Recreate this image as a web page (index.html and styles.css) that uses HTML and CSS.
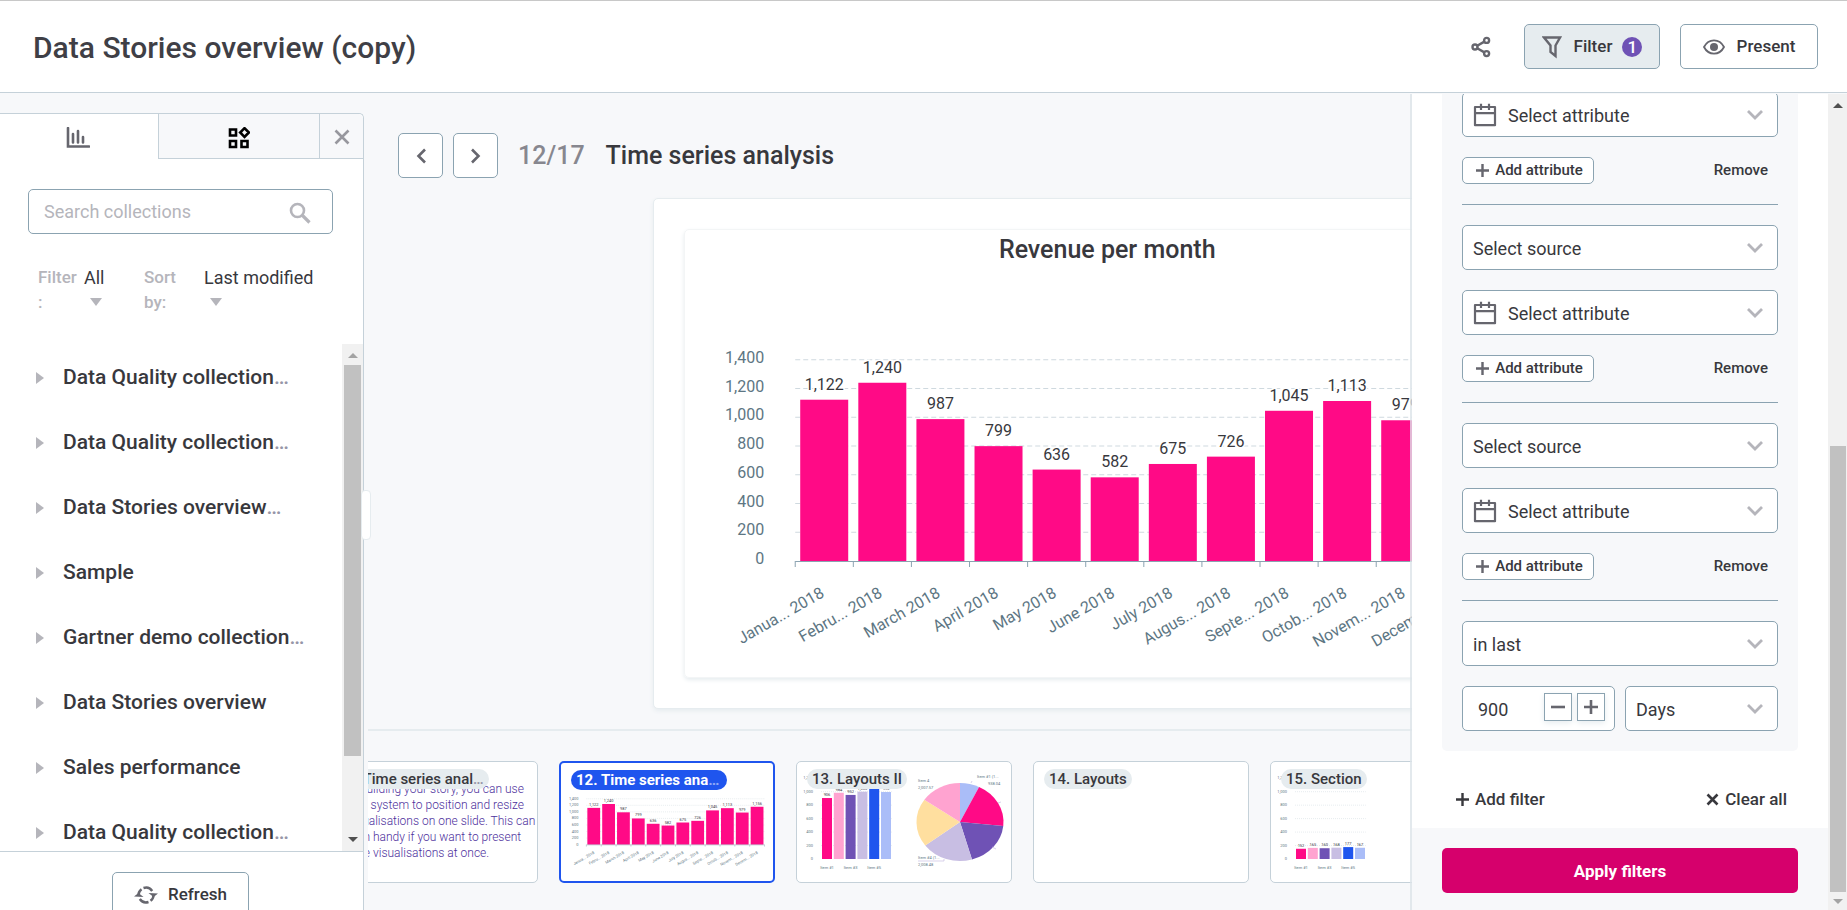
FILE: index.html
```html
<!DOCTYPE html>
<html lang="en">
<head>
<meta charset="utf-8">
<title>Data Stories overview (copy)</title>
<link rel="stylesheet" href="styles.css">
</head>
<body>
<svg class="sprite" aria-hidden="true">
  <symbol id="i-chevron" viewBox="0 0 16 10"><path d="M1 1l7 7 7-7" fill="none" stroke="currentColor" stroke-width="2.8"/></symbol>
  <symbol id="i-calendar" viewBox="0 0 24 24"><path d="M2 4h20v18.200H2zM1.500 10.200h21M8 .8V7M16 .8V7" fill="none" stroke="currentColor" stroke-width="2.2" stroke-linejoin="round"/></symbol>
  <symbol id="i-plus" viewBox="0 0 14 14"><path d="M7 0v14M0 7h14" fill="none" stroke="currentColor" stroke-width="2.6"/></symbol>
</svg>

<header class="topbar">
  <h1 class="topbar-title">Data Stories overview (copy)</h1>
  <button class="icon-button" aria-label="Share">
    <svg width="20" height="22" viewBox="0 0 20 22"><g fill="none" stroke="currentColor" stroke-width="2.4"><circle cx="4" cy="11" r="2.5"/><circle cx="15.6" cy="4.4" r="2.5"/><circle cx="15.6" cy="17.6" r="2.5"/><path d="M6.2 9.800l7.2-4.200M6.2 12.200l7.2 4.200"/></g></svg>
  </button>
  <button class="button button-filter" aria-pressed="true">
    <svg width="20" height="24" viewBox="0 0 20 24"><path d="M2 2.500h16l-4.500 8v10.500l-5-4v-6.500z" fill="none" stroke="currentColor" stroke-width="2.4"/></svg>
    Filter <span class="count">1</span>
  </button>
  <button class="button button-present">
    <svg width="22" height="16" viewBox="0 0 22 16"><path d="M1 8C5.500-.800 16.500-.800 21 8 16.500 16.800 5.500 16.800 1 8z" fill="none" stroke="currentColor" stroke-width="1.800"/><circle cx="11" cy="8" r="4" fill="currentColor"/></svg>
    Present
  </button>
</header>

<div class="workspace">
  <aside class="sidebar">
    <div class="tabs">
      <button class="tab tab-active" aria-label="Visualisations">
        <svg width="24" height="22" viewBox="0 0 24 22"><path d="M2 1v18.500h21M7 7v8.500M12 4v11.500M17 10v5.500" fill="none" stroke="currentColor" stroke-width="2.600" stroke-linecap="round"/></svg>
      </button>
      <button class="tab tab-widgets" aria-label="Widgets">
        <svg width="22" height="22" viewBox="0 0 22 22"><path d="M2 2.500h6v6H2zM2 14h6v6H2zM13.500 14h6v6h-6zM16.500 1.200L20.800 5.500 16.500 9.800 12.200 5.500z" fill="none" stroke="currentColor" stroke-width="2.600"/></svg>
      </button>
      <button class="tab tab-close" aria-label="Close">
        <svg width="16" height="16" viewBox="0 0 16 16"><path d="M1.500 1.500l13 13M14.500 1.500l-13 13" fill="none" stroke="currentColor" stroke-width="2.600"/></svg>
      </button>
    </div>
    <div class="search">
      <input type="text" placeholder="Search collections" aria-label="Search collections">
      <svg class="search-icon" width="22" height="22" viewBox="0 0 22 22"><circle cx="8.500" cy="8.500" r="6.500" fill="none" stroke="currentColor" stroke-width="2.600"/><path d="M13 13l7.500 7.500" stroke="currentColor" stroke-width="3.200"/></svg>
    </div>
    <div class="list-options">
      <span class="option-label option-filter">Filter<br>:</span>
      <button class="option-button option-all">All<span class="caret"></span></button>
      <span class="option-label option-sort">Sort<br>by:</span>
      <button class="option-button">Last modified<span class="caret"></span></button>
    </div>
    <div class="list-area">
      <ul class="collections">
        <li><span class="expander"></span>Data Quality collection<span class="more">…</span></li>
        <li><span class="expander"></span>Data Quality collection<span class="more">…</span></li>
        <li><span class="expander"></span>Data Stories overview<span class="more">…</span></li>
        <li><span class="expander"></span>Sample</li>
        <li><span class="expander"></span>Gartner demo collection<span class="more">…</span></li>
        <li><span class="expander"></span>Data Stories overview</li>
        <li><span class="expander"></span>Sales performance</li>
        <li><span class="expander"></span>Data Quality collection<span class="more">…</span></li>
      </ul>
      <div class="scrollbar scrollbar-list" aria-hidden="true">
        <span class="arrow-up arrow-off"></span><span class="thumb-list"></span><span class="track-rest"></span><span class="arrow-down"></span>
      </div>
    </div>
    <div class="sidebar-footer">
      <button class="button button-refresh">
        <svg width="24" height="20" viewBox="0 0 24 20"><g fill="none" stroke="currentColor" stroke-width="2.400"><path d="M4.500 11A7.500 7.500 0 0 1 7.500 4.200M9.500 3A7.500 7.500 0 0 1 18.200 6"/><path d="M19.500 9A7.500 7.500 0 0 1 16.500 15.800M14.500 17A7.500 7.500 0 0 1 5.800 14"/></g><path d="M0 11.500l4.500-3.500 5 4zM24 8.500l-4.500 3.500-5-4z" fill="currentColor"/></svg>
        Refresh
      </button>
    </div>
    <span class="resize-handle"></span>
  </aside>

  <main class="stage">
    <div class="slide-nav">
      <button class="nav-button" aria-label="Previous slide"><svg width="10" height="16" viewBox="0 0 10 16"><path d="M9 1.500L2.500 8 9 14.500" fill="none" stroke="currentColor" stroke-width="2.600"/></svg></button>
      <button class="nav-button" aria-label="Next slide"><svg width="10" height="16" viewBox="0 0 10 16"><path d="M1 1.500L7.500 8 1 14.500" fill="none" stroke="currentColor" stroke-width="2.600"/></svg></button>
      <span class="slide-count">12/17</span>
      <h2 class="slide-title">Time series analysis</h2>
    </div>
    <div class="slide-area">
      <section class="slide">
        <figure class="widget">
          <svg id="main-chart" class="chart" viewBox="0 0 844 447" role="img" aria-label="Revenue per month"></svg>
        </figure>
      </section>
    </div>
    <div class="filmstrip">
      <article class="thumb">
        <span class="badge">11. Time series anal<span class="more">…</span></span>
        <p class="thumb-text">While building your story, you can use<br>the grid system to position and resize<br>the visualisations on one slide. This can<br>come in handy if you want to present<br>multiple visualisations at once.</p>
      </article>
      <article class="thumb thumb-current">
        <span class="badge">12. Time series ana<span class="more">…</span></span>
        <svg id="thumb-12" class="chart" viewBox="0 0 214 120"></svg>
      </article>
      <article class="thumb">
        <span class="badge">13. Layouts II</span>
        <svg id="thumb-13" class="chart" viewBox="0 0 214 120"></svg>
      </article>
      <article class="thumb"><span class="badge">14. Layouts</span></article>
      <article class="thumb">
        <span class="badge">15. Section</span>
        <svg id="thumb-15" class="chart" viewBox="0 0 214 120"></svg>
      </article>
    </div>
  </main>

  <aside class="filter-panel">
    <form class="filter-scroll">
      <div class="filter-group">
        <div class="field field-date"><svg class="field-icon"><use href="#i-calendar"/></svg><select aria-label="Attribute 1"><option>Select attribute</option></select><svg class="chevron"><use href="#i-chevron"/></svg></div>
        <div class="row"><button type="button" class="small-button"><svg><use href="#i-plus"/></svg>Add attribute</button><button type="button" class="text-button">Remove</button></div>
        <hr>
        <div class="field"><select aria-label="Source 2"><option>Select source</option></select><svg class="chevron"><use href="#i-chevron"/></svg></div>
        <div class="field field-date"><svg class="field-icon"><use href="#i-calendar"/></svg><select aria-label="Attribute 2"><option>Select attribute</option></select><svg class="chevron"><use href="#i-chevron"/></svg></div>
        <div class="row"><button type="button" class="small-button"><svg><use href="#i-plus"/></svg>Add attribute</button><button type="button" class="text-button">Remove</button></div>
        <hr>
        <div class="field"><select aria-label="Source 3"><option>Select source</option></select><svg class="chevron"><use href="#i-chevron"/></svg></div>
        <div class="field field-date"><svg class="field-icon"><use href="#i-calendar"/></svg><select aria-label="Attribute 3"><option>Select attribute</option></select><svg class="chevron"><use href="#i-chevron"/></svg></div>
        <div class="row"><button type="button" class="small-button"><svg><use href="#i-plus"/></svg>Add attribute</button><button type="button" class="text-button">Remove</button></div>
        <hr>
        <div class="field"><select aria-label="Condition"><option>in last</option></select><svg class="chevron"><use href="#i-chevron"/></svg></div>
        <div class="pair">
          <div class="stepper">
            <input type="text" inputmode="numeric" value="900" aria-label="Amount">
            <button type="button" aria-label="Decrease"><svg width="14" height="14" viewBox="0 0 14 14"><path d="M0 7h14" stroke="currentColor" stroke-width="2.600"/></svg></button>
            <button type="button" aria-label="Increase"><svg width="14" height="14" viewBox="0 0 14 14"><path d="M0 7h14M7 0v14" stroke="currentColor" stroke-width="2.600"/></svg></button>
          </div>
          <div class="field"><select aria-label="Unit"><option>Days</option></select><svg class="chevron"><use href="#i-chevron"/></svg></div>
        </div>
      </div>
      <div class="filter-actions">
        <button type="button" class="link-button"><svg width="13" height="13"><use href="#i-plus"/></svg>Add filter</button>
        <button type="button" class="link-button"><svg width="13" height="13" viewBox="0 0 13 13"><path d="M1.500 1.500l10 10M11.500 1.500l-10 10" stroke="currentColor" stroke-width="2.600"/></svg>Clear all</button>
      </div>
      <div class="filter-footer"><button type="submit" class="apply-button">Apply filters</button></div>
    </form>
    <div class="scrollbar scrollbar-filter" aria-hidden="true">
      <span class="arrow-up"></span><span class="track-filter"></span><span class="thumb-filter"></span><span class="arrow-down arrow-off"></span>
    </div>
  </aside>
</div>
<script src="charts.js"></script>
</body>
</html>
```
FILE: styles.css
```css
* { box-sizing: border-box; }

body {
  margin: 0;
  height: 100vh;
  display: flex;
  flex-direction: column;
  overflow: hidden;
  background: #f7f8fa;
  color: #38383d;
  font: 400 18px/25px Roboto, "Liberation Sans", sans-serif;
}

h1, h2, ul, p, figure { margin: 0; padding: 0; }

button, input, select {
  font: inherit;
  color: inherit;
  margin: 0;
  padding: 0;
  border: 0;
  background: none;
}

.sprite { display: none; }

/* Top bar */
.topbar {
  flex: none;
  height: 93px;
  display: flex;
  align-items: center;
  padding: 0 29px 0 33px;
  background: #fff;
  border-top: 1px solid #c8c8c8;
  border-bottom: 1px solid #c5d1d9;
}

.topbar-title { flex: 1; padding-top: 3px; font-size: 30px; line-height: 40px; font-weight: 500; color: #3f3f46; }

.icon-button { display: flex; margin-right: 33px; color: #66666e; }

.button {
  height: 45px;
  display: flex;
  align-items: center;
  justify-content: center;
  background: #fff;
  border: 1px solid #8ba3b1;
  border-radius: 5px;
  font-size: 17px;
  font-weight: 500;
}

.button svg { color: #66666e; }
.button-filter { width: 136px; gap: 12px; margin-right: 20px; background: #e6ecef; }
.button-filter .count { margin-left: -2px; }
.button-present { width: 138px; gap: 12px; }

.count {
  width: 20px;
  height: 20px;
  line-height: 20px;
  border-radius: 10px;
  background: #6f52b5;
  color: #fff;
  font-size: 17px;
}

.workspace { flex: 1; min-height: 0; display: flex; position: relative; }

/* Sidebar */
.sidebar {
  flex: none;
  width: 364px;
  margin-top: 20px;
  position: relative;
  display: flex;
  flex-direction: column;
  background: #fff;
  border: solid #c5d1d9;
  border-width: 1px 1px 0 0;
  border-top-right-radius: 5px;
}

.tabs { display: flex; height: 45px; flex: none; }
.tab { display: flex; align-items: center; justify-content: center; padding-top: 3px; }
.tab-active { flex: 1; color: #66666e; padding-right: 2px; }
.tab-widgets { width: 161px; color: #000; background: #f7f8fa; border: solid #c5d1d9; border-width: 0 0 1px 1px; }
.tab-close { width: 44px; padding-top: 1px; color: #97979e; background: #f7f8fa; border: solid #c5d1d9; border-width: 0 0 1px 1px; border-top-right-radius: 5px; }

.search { flex: none; margin: 30px 30px 0 28px; position: relative; }
.search input { width: 100%; height: 45px; padding: 0 50px 0 15px; border: 1px solid #8ba3b1; border-radius: 5px; display: block; }
.search input::placeholder { color: #b5b5bb; }
.search-icon { position: absolute; right: 22px; top: 13px; color: #b5b5bb; }

.list-options { flex: none; display: flex; margin: 31px 0 0 38px; height: 79px; align-items: flex-start; }
.option-label { color: #b5b5bb; font-size: 17px; font-weight: 500; }
.option-filter { width: 46px; }
.option-sort { width: 60px; }
.option-all { width: 60px; }
.option-button { text-align: left; color: #38383d; }
.caret { display: block; margin: 8px 0 0 6px; width: 12px; border: solid transparent; border-width: 8px 6px 0; border-top-color: #b5b5bb; }

.list-area { flex: 1; min-height: 0; display: flex; overflow: hidden; }
.collections { flex: 1; list-style: none; font-size: 21px; font-weight: 500; }
.collections li { height: 65px; display: flex; align-items: center; padding: 1px 0 0 36px; }
.expander { width: 8px; margin: 2px 19px 0 0; border: solid transparent; border-width: 6px 0 6px 8px; border-left-color: #b5b5bb; }
.more { color: #9696a8; }

.scrollbar { flex: none; display: flex; flex-direction: column; align-items: center; background: #f1f1f1; }
.arrow-up, .arrow-down { width: 10px; border: solid transparent; border-width: 0 5px 5px; border-bottom-color: #505050; }
.arrow-down { border-width: 5px 5px 0; border-top-color: #505050; }
.arrow-up.arrow-off { border-bottom-color: #a3a3a3; }
.arrow-down.arrow-off { border-top-color: #a3a3a3; }

.scrollbar-list { width: 21px; padding: 9px 0; }
.thumb-list { width: 17px; flex: 391; margin-top: 7px; background: #c1c1c1; }
.track-rest { flex: 81; }

.sidebar-footer { flex: none; height: 59px; overflow: hidden; border-top: 1px solid #c5d1d9; padding: 20px 0 0 112px; }
.button-refresh { width: 137px; gap: 10px; }

.resize-handle {
  position: absolute;
  right: -8px;
  top: 376px;
  width: 10px;
  height: 50px;
  background: #fff;
  border: 1px solid #e6ecef;
  border-radius: 4px;
}

/* Slide stage */
.stage { flex: 1; min-width: 0; margin-left: 4px; display: flex; flex-direction: column; overflow: hidden; }

.slide-nav { flex: none; display: flex; align-items: center; margin: 40px 0 0 30px; height: 45px; }
.nav-button { width: 45px; height: 45px; margin-right: 10px; display: flex; align-items: center; justify-content: center; background: #fff; border: 1px solid #8ba3b1; border-radius: 5px; color: #66666e; }
.slide-count { margin: 0 21px 0 10px; font-size: 25px; font-weight: 500; color: #87878f; }
.slide-title { font-size: 25px; font-weight: 500; color: #38383d; }

.slide-area { flex: 1; min-height: 0; display: flex; justify-content: center; padding: 20px 0; }
.slide { aspect-ratio: 16 / 9; height: 100%; padding: 30px; background: #fff; border: 1px solid #e6ecef; border-radius: 5px; box-shadow: 0 2px 4px #e6ecef; }
.widget { height: 100%; border: 1px solid #f3f5f6; border-radius: 5px; box-shadow: 0 2px 4px #e6ecef; }
.chart { display: block; width: 100%; height: 100%; }

.filmstrip { flex: none; display: flex; gap: 21px; height: 181px; padding-top: 30px; margin-left: -46px; border-top: 2px solid #e6ecef; overflow: hidden; }
.thumb { flex: none; width: 216px; height: 122px; position: relative; background: #fff; border: 1px solid #c5d1d9; border-radius: 5px; overflow: hidden; }
.thumb-current { border: 2px solid #1f55ee; }
.badge { position: absolute; left: 10px; top: 7px; height: 20px; line-height: 20px; padding: 0 5px; border-radius: 10px; background: #e6ecef; font-size: 15px; font-weight: 500; white-space: nowrap; }
.thumb-current .badge { background: #1f55ee; color: #fff; padding-right: 8px; font-weight: 700; }
.thumb-current .more { color: #8fa8f6; }
.thumb-text { padding: 19px 0 0 5px; font-size: 12px; line-height: 16px; font-weight: 300; color: #4d2f9c; white-space: nowrap; }

.axis-text { fill: #5d7683; font-size: 16px; }
.value-text { fill: #38383d; font-size: 16px; }
.chart-title { fill: #38383d; font-size: 25px; font-weight: 500; }
.tiny { fill: #5d7683; font-size: 4px; }
.tiny-value { fill: #38383d; font-size: 4px; }

/* Filter panel */
.filter-panel {
  position: absolute;
  right: 0;
  top: 1px;
  bottom: 0;
  width: 437px;
  display: flex;
  background: #fff;
  background-clip: padding-box;
  border-left: 2px solid rgba(220, 227, 232, 0.8);
}

.filter-scroll { flex: 1; display: flex; flex-direction: column; justify-content: flex-end; overflow: hidden; }
.filter-group { margin: 0 30px; padding: 20px; background: #f7f8fa; border-radius: 5px; display: flex; flex-direction: column; gap: 20px; }
.filter-group hr { width: 100%; height: 1px; margin: 0; border: 0; background: #8ba3b1; }
.field { position: relative; }
.field select { display: block; width: 100%; height: 45px; padding: 1px 50px 0 10px; appearance: none; background: #fff; border: 1px solid #8ba3b1; border-radius: 5px; }
.field-date select { padding-left: 45px; }
.field-icon { position: absolute; left: 11px; top: 11px; width: 24px; height: 24px; color: #66666e; pointer-events: none; }
.chevron { position: absolute; right: 15px; top: 18px; width: 16px; height: 10px; color: #b5b5bb; pointer-events: none; }

.row { display: flex; justify-content: space-between; align-items: center; height: 27px; font-size: 15px; font-weight: 500; }
.small-button { width: 132px; height: 27px; display: flex; align-items: center; justify-content: center; gap: 6px; padding-left: 3px; background: #fff; border: 1px solid #8ba3b1; border-radius: 5px; }
.small-button svg { width: 13px; height: 13px; color: #66666e; }
.text-button { margin-right: 10px; }

.pair { display: grid; grid-template-columns: minmax(0, 1fr) minmax(0, 1fr); gap: 10px; }
.stepper { display: flex; gap: 5px; padding: 6px 9px 0 15px; background: #fff; border: 1px solid #8ba3b1; border-radius: 5px; }
.stepper input { flex: 1; width: 0; height: 32px; }
.stepper button { width: 28px; height: 28px; display: flex; align-items: center; justify-content: center; border: 1px solid #8ba3b1; color: #66666e; box-shadow: 0 2px 6px #e6ecef; }

.filter-actions { display: flex; justify-content: space-between; margin: 32px 41px 13px 44px; }
.link-button { height: 32px; display: flex; align-items: center; gap: 6px; font-size: 17px; font-weight: 500; }
.filter-footer { padding: 20px 30px 17px; background: #f7f8fa; }
.apply-button { display: block; width: 100%; height: 45px; padding-top: 2px; border-radius: 5px; background: #d6006c; color: #fff; font-size: 17px; font-weight: 700; }

.scrollbar-filter { width: 19px; padding: 9px 0 6px; }
.track-filter { flex: 338; }
.thumb-filter { flex: 445; width: 16px; margin-bottom: 7px; background: #c1c1c1; }
```
FILE: charts.js
```js
const NS = 'http://www.w3.org/2000/svg';
const PINK = '#ff0a86';
const PALETTE = [PINK, '#ffa3d0', '#6f52b5', '#c8bee3', '#1f55ee', '#aabdf8'];
const MONTHS = ['Janua... 2018', 'Febru... 2018', 'March 2018', 'April 2018', 'May 2018', 'June 2018',
  'July 2018', 'Augus... 2018', 'Septe... 2018', 'Octob... 2018', 'Novem... 2018', 'Decem... 2018'];
const REVENUE = [1122, 1240, 987, 799, 636, 582, 675, 726, 1045, 1113, 979, 1156];

function add(svg, tag, attrs, text) {
  const el = document.createElementNS(NS, tag);
  for (const key in attrs) el.setAttribute(key, attrs[key]);
  if (text !== undefined) el.textContent = text;
  svg.appendChild(el);
  return el;
}

function drawBars(svg, o) {
  const y = v => o.base - v * o.scale;
  const end = o.left + o.step * o.values.length;
  for (let v = 0; v <= o.max; v += 200) {
    if (v) add(svg, 'line', { x1: o.left, x2: end, y1: y(v), y2: y(v), stroke: '#cfd9df', 'stroke-width': o.line, 'stroke-dasharray': o.dash });
    add(svg, 'text', { class: o.axisClass, x: o.labelRight, y: y(v) + o.labelDrop, 'text-anchor': 'end' }, v.toLocaleString('en-US'));
  }
  o.values.forEach((v, i) => {
    const x = o.left + o.step * i + o.inset;
    add(svg, 'rect', { x: x, y: y(v), width: o.width, height: v * o.scale, fill: o.colors[i % o.colors.length] });
    const label = add(svg, 'text', { class: o.valueClass, x: x + o.width / 2, y: y(v) - o.valueRise, 'text-anchor': 'middle' }, v.toLocaleString('en-US'));
    if (o.halo) { label.setAttribute('stroke', '#fff'); label.setAttribute('stroke-width', 3); label.setAttribute('paint-order', 'stroke'); }
  });
  if (o.axis) {
    add(svg, 'line', { x1: o.left, x2: end, y1: o.base + o.line / 2, y2: o.base + o.line / 2, stroke: '#8ba3b1', 'stroke-width': o.line });
    for (let i = 0; i <= o.values.length; i++) {
      const x = o.left + o.step * i;
      add(svg, 'line', { x1: x, x2: x, y1: o.base, y2: o.base + o.tick, stroke: '#8ba3b1', 'stroke-width': o.line });
    }
  }
}

function drawMonths(svg, o) {
  MONTHS.forEach((m, i) => {
    const x = o.left + o.step * i + o.inset + o.width / 2 + o.monthShift;
    const y = o.base + o.monthDrop;
    add(svg, 'text', { class: o.axisClass, x: x, y: y, 'text-anchor': 'end', transform: `rotate(-30 ${x} ${y})` }, m);
  });
}

const main = document.getElementById('main-chart');
add(main, 'text', { class: 'chart-title', x: 422, y: 28, 'text-anchor': 'middle' }, 'Revenue per month');
const big = { values: REVENUE, colors: [PINK], left: 110, step: 58.1, inset: 5, width: 48, base: 331, scale: 0.14375, max: 1400,
  line: 1, dash: '5 3', labelRight: 79, labelDrop: 3, valueRise: 10, tick: 6, axis: true, halo: true,
  axisClass: 'axis-text', valueClass: 'value-text', monthShift: 1, monthDrop: 35 };
drawBars(main, big);
drawMonths(main, big);

const t12 = document.getElementById('thumb-12');
const small = { values: REVENUE, colors: [PINK], left: 25, step: 15.1, inset: 1, width: 13, base: 83, scale: 0.0333, max: 1400,
  line: 0.5, dash: '1 1', labelRight: 17, labelDrop: 1, valueRise: 2, tick: 2, axis: true,
  axisClass: 'tiny', valueClass: 'tiny-value', monthShift: 1, monthDrop: 9 };
drawBars(t12, small);
drawMonths(t12, small);

function drawItems(id, values) {
  const svg = document.getElementById(id);
  drawBars(svg, { values: values, colors: PALETTE, left: 24, step: 11.8, inset: 1, width: 10, base: 97, scale: 0.0673, max: 1200,
    line: 0.5, dash: '1 1', labelRight: 16, labelDrop: 1, valueRise: 2, axis: false, axisClass: 'tiny', valueClass: 'tiny-value' });
  ['Item #1', 'Item #3', 'Item #5'].forEach((name, i) =>
    add(svg, 'text', { class: 'tiny', x: 30 + i * 23.6, y: 107, 'text-anchor': 'middle' }, name));
  return svg;
}

drawItems('thumb-15', [152, 165, 160, 168, 177, 167]);
const t13 = drawItems('thumb-13', [906, 984, 952, 1000, 1060, 995]);

const cuts = [0, 26, 96, 164, 233, 305, 360];
const fills = ['#aabdf8', PINK, '#6f52b5', '#c8bee3', '#ffdf9f', '#ffa3d0'];
const point = deg => [163 + 43.5 * Math.sin(deg * Math.PI / 180), 60 - 39 * Math.cos(deg * Math.PI / 180)].join(' ');
fills.forEach((fill, i) => {
  add(t13, 'path', { d: `M163 60L${point(cuts[i])}A43.5 39 0 0 1 ${point(cuts[i + 1])}Z`, fill: fill });
});
add(t13, 'path', { d: 'M121 99h26v-2M174 21l1-2M201 41l3-1M195 85l4 2', fill: 'none', stroke: '#c8bee3', 'stroke-width': 0.7 });
[['Item 4', 121, 20], ['2,007.57', 121, 27], ['Item #1 (1...', 180, 16], ['938.04', 191, 23], ['Item #4 (1...', 121, 97], ['2,008.48', 121, 104]]
  .forEach(([text, x, y]) => add(t13, 'text', { class: 'tiny', x: x, y: y }, text));
```
